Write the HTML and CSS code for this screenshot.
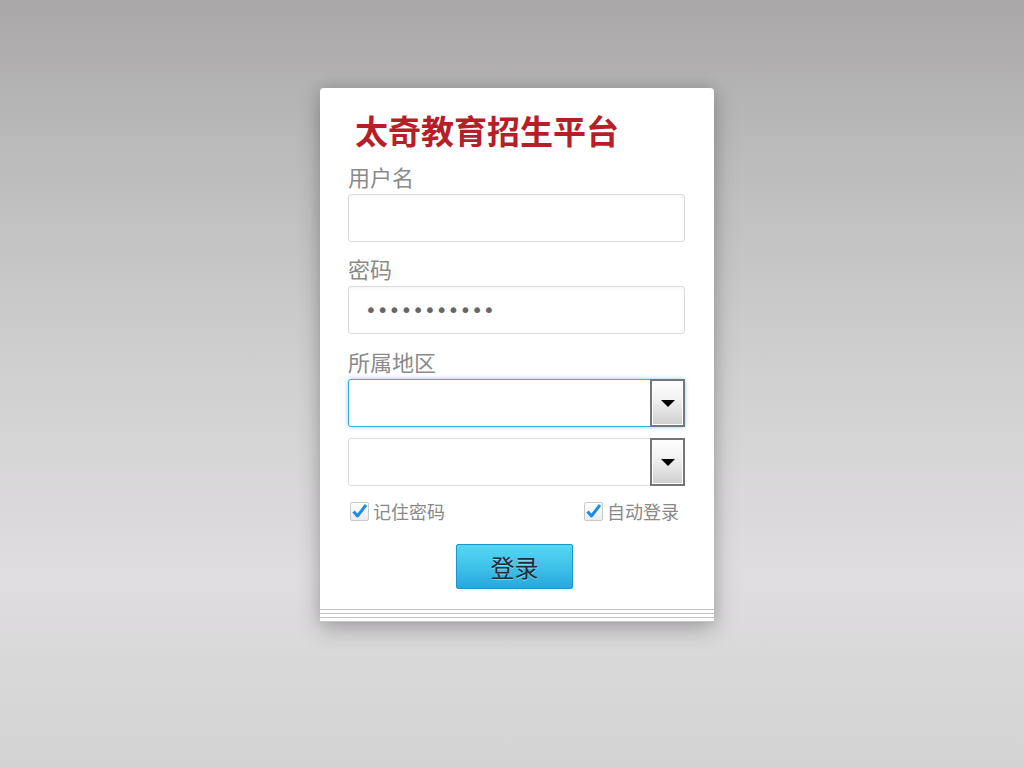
FILE: index.html
```html
<!DOCTYPE html>
<html lang="zh-CN">
<head>
    <meta charset="UTF-8">
    <meta name="viewport" content="width=device-width, initial-scale=1.0">
    <title>太奇教育招生平台 - 登录</title>
    <link rel="stylesheet" href="styles.css">
</head>
<body>
    <div class="login-wrap">
        <div class="login-card">
            <h1 class="login-title">太奇教育招生平台</h1>

            <label class="field-label" for="username">用户名</label>
            <input class="text-input" id="username" type="text">

            <label class="field-label" for="password">密码</label>
            <input class="text-input pwd-input" id="password" type="password" value="12345678901">

            <label class="field-label area-label" for="province">所属地区</label>
            <div class="select-box focused">
                <select id="province"></select>
                <span class="select-arrow"><i></i></span>
            </div>
            <div class="select-box">
                <select id="city"></select>
                <span class="select-arrow"><i></i></span>
            </div>

            <div class="check-row">
                <label class="check-item">
                    <span class="check-box">
                        <svg width="17" height="17" viewBox="0 0 17 17"><path d="M2.5 8.5 L6.5 13 L15 2" fill="none" stroke="#1b8de3" stroke-width="3" stroke-linejoin="round"/></svg>
                    </span>
                    记住密码
                </label>
                <label class="check-item">
                    <span class="check-box">
                        <svg width="17" height="17" viewBox="0 0 17 17"><path d="M2.5 8.5 L6.5 13 L15 2" fill="none" stroke="#1b8de3" stroke-width="3" stroke-linejoin="round"/></svg>
                    </span>
                    自动登录
                </label>
            </div>

            <div class="btn-row">
                <button class="login-button">登录</button>
            </div>
        </div>
        <div class="sheet"></div>
        <div class="sheet"></div>
        <div class="sheet"></div>
    </div>
</body>
</html>
```

FILE: styles.css
```css
html, body {
    height: 100%;
}

body {
    margin: 0;
    font-family: "Noto Sans CJK SC", "Liberation Sans", sans-serif;
    background: linear-gradient(180deg, #a9a7a8 0%, #bcbbbc 20%, #d2d1d2 50%, #dfdddf 75%, #d3d3d3 100%);
    overflow: hidden;
}

.login-wrap {
    width: 394px;
    margin: 88px 0 0 320px;
    box-shadow: 0 8px 24px rgba(0, 0, 0, 0.22), 0 0 14px rgba(0, 0, 0, 0.12);
    border-radius: 4px;
}

.login-card {
    background: #ffffff;
    border-radius: 4px 4px 0 0;
    padding: 19px 29px 20px 28px;
    display: flex;
    flex-direction: column;
    border-bottom: 1px solid #c4c4c4;
}

.sheet {
    height: 3px;
    background: #ffffff;
    border-bottom: 1px solid #c4c4c4;
}

.login-title {
    margin: 0 0 8px 7px;
    font-size: 33px;
    line-height: 46px;
    font-weight: bold;
    color: #b71f28;
}

.field-label {
    font-size: 22px;
    line-height: 30px;
    color: #8a8a8a;
    margin-bottom: 3px;
}

.area-label {
    margin-top: 1px;
}

.text-input {
    height: 48px;
    box-sizing: border-box;
    border: 1px solid #dcdcdc;
    border-radius: 3px;
    box-shadow: inset 0 1px 3px rgba(0, 0, 0, 0.06);
    margin: 0 0 11px 0;
    padding: 0 16px;
    font-size: 16px;
    outline: none;
    background: #fff;
}

.pwd-input {
    font-family: "DejaVu Sans", sans-serif;
    font-size: 20px;
    letter-spacing: 0;
    color: #666;
}

.select-box {
    height: 48px;
    box-sizing: border-box;
    border: 1px solid #dcdcdc;
    border-radius: 3px;
    display: flex;
    margin-bottom: 11px;
    background: #fff;
}

.select-box.focused {
    border-color: #3aaed9;
    box-shadow: 0 0 4px rgba(58, 174, 217, 0.6);
}

.select-box select {
    flex: 1;
    appearance: none;
    border: none;
    background: transparent;
    outline: none;
    font-size: 16px;
}

.select-arrow {
    width: 35px;
    box-sizing: border-box;
    border: 2px solid #767676;
    margin: -1px -1px -1px 0;
    background: linear-gradient(180deg, #ffffff 0%, #f2f2f2 40%, #cfcfcf 100%);
    box-shadow: inset 0 0 0 1px #ffffff;
    display: flex;
    align-items: center;
    justify-content: center;
}

.select-arrow i {
    width: 0;
    height: 0;
    border-left: 7px solid transparent;
    border-right: 7px solid transparent;
    border-top: 7px solid #000;
}

.check-row {
    display: flex;
    justify-content: space-between;
    margin: 1px 6px 0 2px;
}

.check-item {
    display: flex;
    align-items: center;
    font-size: 18px;
    line-height: 26px;
    color: #888;
    gap: 4px;
}

.check-box {
    width: 19px;
    height: 19px;
    box-sizing: border-box;
    border: 1px solid #c9c9c9;
    border-radius: 2px;
    background: linear-gradient(180deg, #ffffff, #ececec);
    display: flex;
    align-items: center;
    justify-content: center;
}

.btn-row {
    display: flex;
    justify-content: center;
    margin-top: 20px;
}

.login-button {
    width: 117px;
    height: 45px;
    margin-right: 4px;
    border: 1px solid #1a98cd;
    border-radius: 2px;
    background: linear-gradient(180deg, #56d8f2 0%, #3fc2ea 50%, #27a8dc 100%);
    font-family: "Noto Sans CJK SC", sans-serif;
    font-size: 24px;
    color: #1d2d33;
    text-shadow: 0 1px 0 rgba(255, 255, 255, 0.4);
    cursor: pointer;
}
```
